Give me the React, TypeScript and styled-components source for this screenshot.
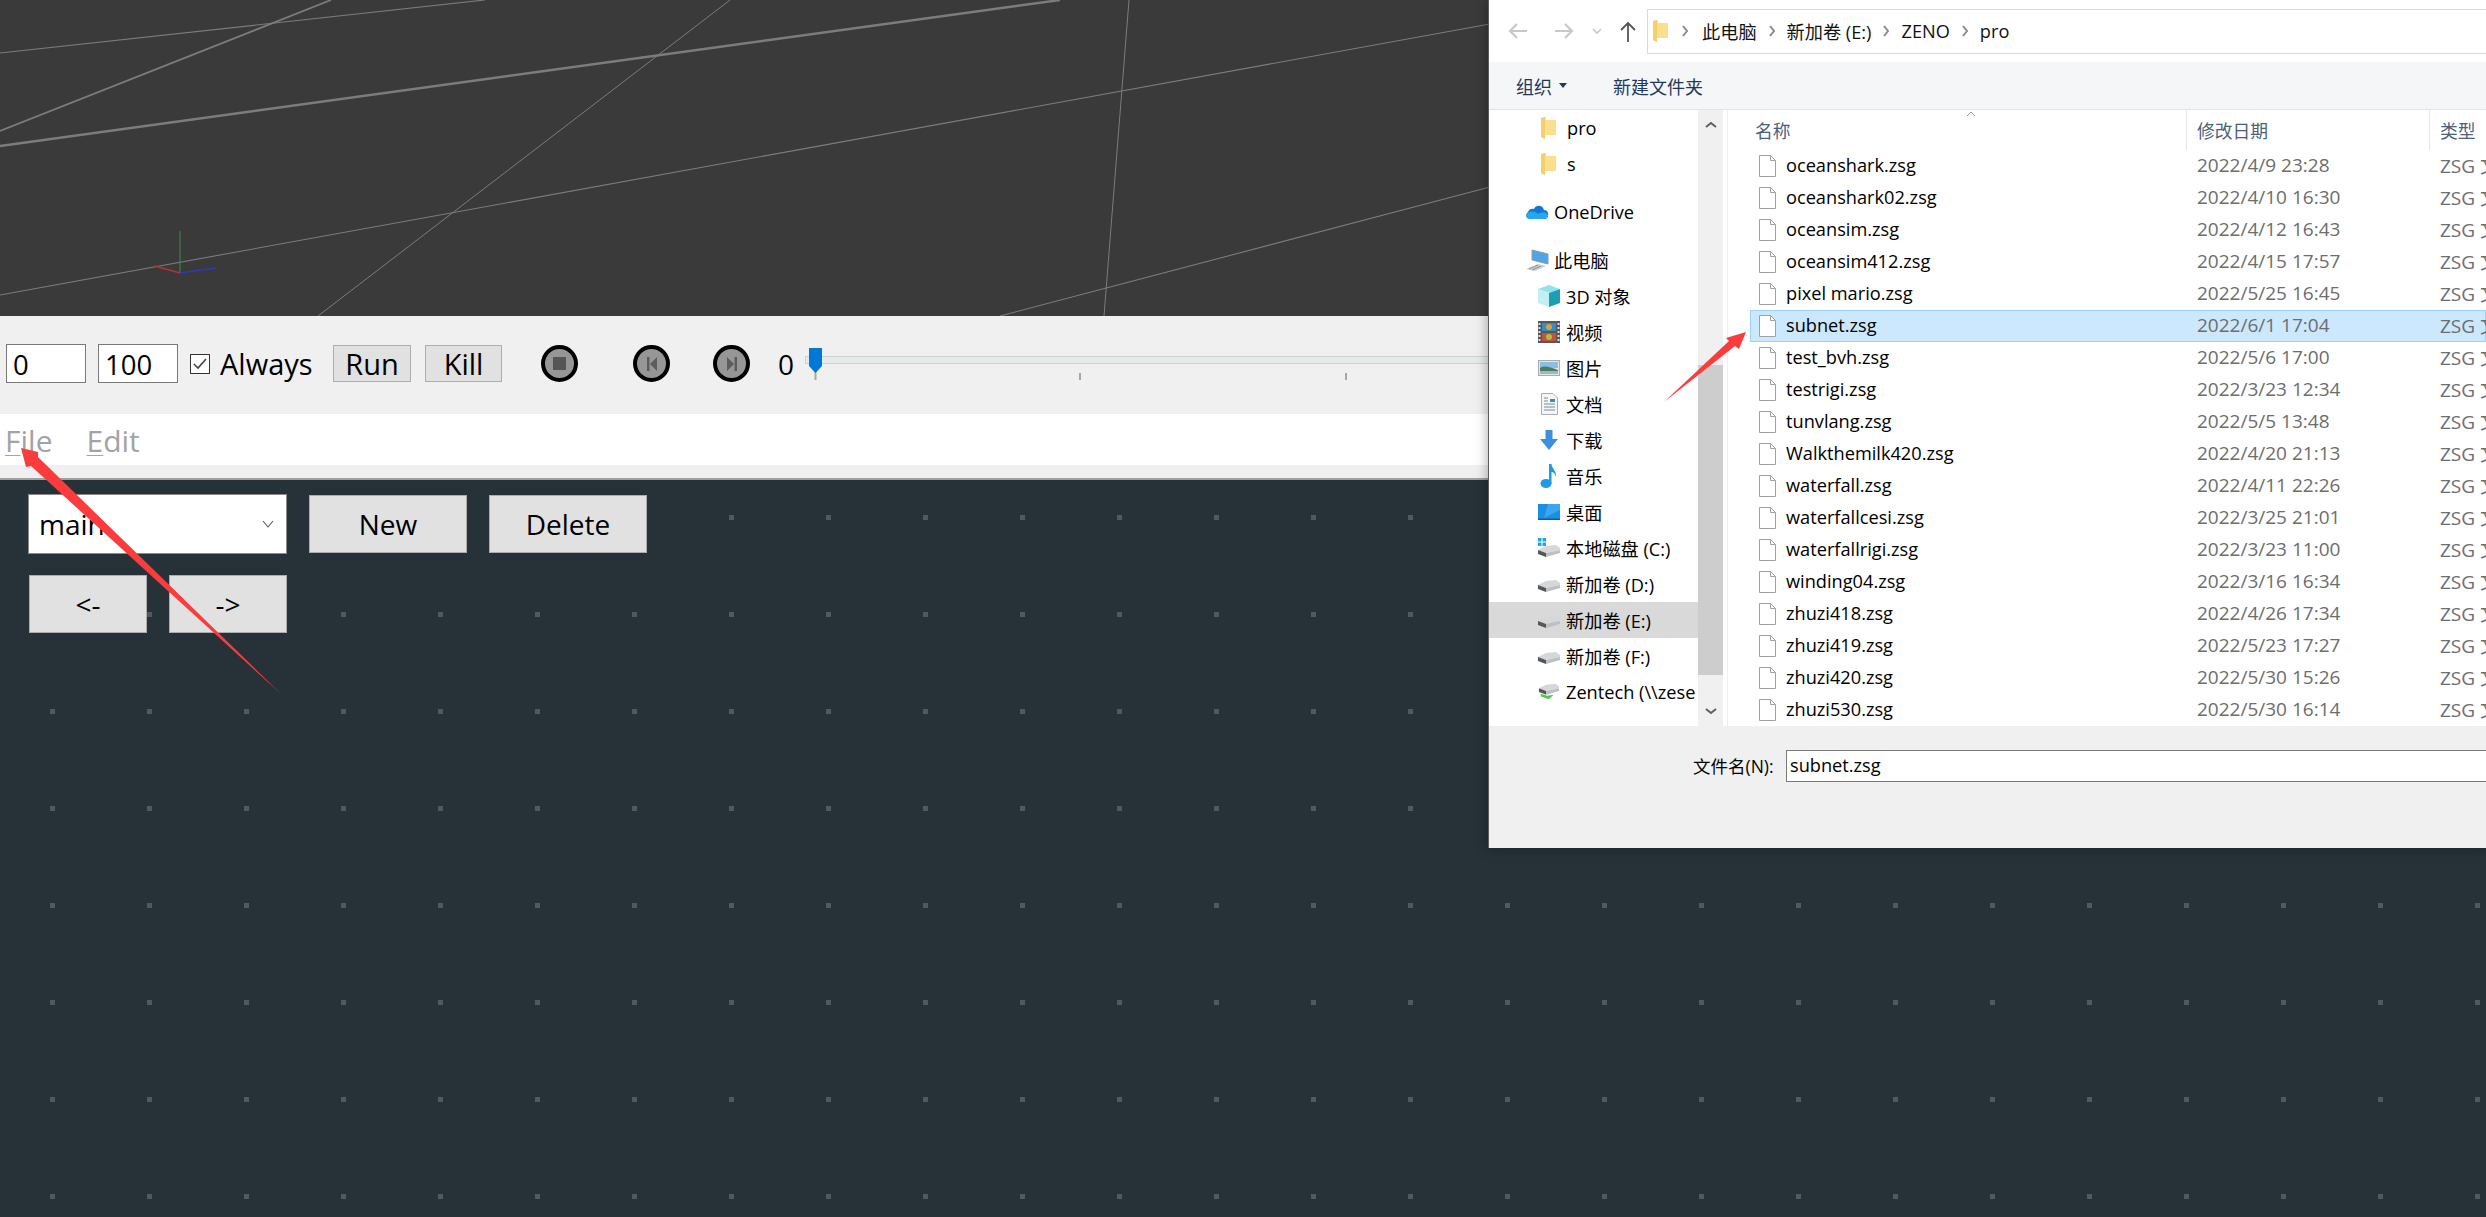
import React from 'react'
import styled, { createGlobalStyle } from 'styled-components'

const UI_FONT = `"Open Sans", "Noto Sans CJK SC", sans-serif`

const GlobalStyle = createGlobalStyle`
  html, body {
    margin: 0;
    padding: 0;
    background: #263238;
  }
  * {
    box-sizing: border-box;
  }
`

const Page = styled.div`
  position: relative;
  width: 2486px;
  height: 1217px;
  overflow: hidden;
  display: flex;
  flex-direction: column;
  font-family: ${UI_FONT};
`

const Viewport = styled.div`
  height: 316px;
  background: #3a3a3a;
  flex: none;
  svg {
    display: block;
  }
`

const Timeline = styled.div`
  height: 98px;
  flex: none;
  background: #f0f0f0;
  padding: 28px 0 0 6px;
  display: flex;
  align-items: flex-start;
`

const TimelineRow = styled.div`
  height: 39px;
  width: 100%;
  display: flex;
  align-items: center;
`

const FrameInput = styled.div<{ $ml?: number }>`
  width: 80px;
  height: 39px;
  margin-left: ${(p) => p.$ml ?? 0}px;
  background: #fff;
  border: 1px solid #7a7a7a;
  padding: 2px 0 0 6px;
  font-size: 27.5px;
  line-height: 36px;
  color: #000;
`

const CheckGroup = styled.div`
  width: 143px;
  margin-left: 12px;
  display: flex;
  align-items: center;
  gap: 10px;
  font-size: 29px;
  color: #000;
`

const CheckBox = styled.div`
  width: 20px;
  height: 20px;
  border: 1px solid #333;
  background: #fff;
  display: flex;
  align-items: center;
  justify-content: center;
`

const BarButton = styled.div<{ $w: number; $ml?: number }>`
  width: ${(p) => p.$w}px;
  height: 37px;
  margin-left: ${(p) => p.$ml ?? 0}px;
  background: #e1e1e1;
  border: 1px solid #adadad;
  display: flex;
  align-items: center;
  justify-content: center;
  font-size: 29px;
  color: #000;
`

const MediaButton = styled.div<{ $ml: number }>`
  width: 37px;
  height: 37px;
  margin-left: ${(p) => p.$ml}px;
  border-radius: 50%;
  border: 4px solid #000;
  background: #969696;
  display: flex;
  align-items: center;
  justify-content: center;
  flex: none;
`

const FrameReadout = styled.div`
  width: 28px;
  margin-left: 27px;
  padding-left: 1px;
  font-size: 28px;
  color: #000;
`

const Slider = styled.div`
  position: relative;
  flex: 1;
  height: 39px;
  padding-top: 12px;
`

const SliderTrack = styled.div`
  height: 8px;
  background: #e7eaea;
  border-top: 1px solid #d0d0d0;
  border-bottom: 1px solid #d0d0d0;
  border-left: 1px solid #d0d0d0;
`

const SliderHandle = styled.svg`
  position: absolute;
  left: 4px;
  top: 4px;
`

const SliderTick = styled.div<{ $left: number }>`
  position: absolute;
  left: ${(p) => p.$left}px;
  top: 29px;
  width: 2px;
  height: 7px;
  background: #a8a89c;
`

const MenuBar = styled.div`
  height: 51px;
  flex: none;
  background: #fff;
  padding: 3px 0 0 5px;
  display: flex;
  gap: 34px;
  align-items: flex-start;
  font-size: 30px;
  line-height: 48px;
  color: #a3a3a3;
  u {
    text-underline-offset: 3px;
    text-decoration-thickness: 1px;
  }
`

const MenuStrip = styled.div`
  height: 15px;
  flex: none;
  background: #f0f0f0;
  border-bottom: 2px solid #a0a0a0;
`

const Canvas = styled.div`
  flex: 1;
  padding: 14px 0 0 28px;
  background-color: #263238;
  background-image: conic-gradient(at 5px 5px, transparent 75%, #4f5a60 75%);
  background-size: 97px 97px;
  background-position: 50px 35px;
`

const CanvasRow = styled.div<{ $mt?: number; $ml?: number }>`
  display: flex;
  align-items: center;
  gap: 22px;
  margin-top: ${(p) => p.$mt ?? 0}px;
  margin-left: ${(p) => p.$ml ?? 0}px;
`

const GraphSelect = styled.div`
  width: 259px;
  height: 60px;
  background: #fff;
  border: 1px solid #8a8a8a;
  padding: 0 12px 0 10px;
  display: flex;
  align-items: center;
  justify-content: space-between;
  font-size: 28px;
  color: #000;
`

const CanvasButton = styled.div<{ $w: number }>`
  width: ${(p) => p.$w}px;
  height: 58px;
  background: #e1e1e1;
  border: 1px solid #adadad;
  display: flex;
  align-items: center;
  justify-content: center;
  font-size: 28px;
  color: #000;
`

const Dialog = styled.div`
  position: absolute;
  left: 1488px;
  top: 0;
  right: 0;
  height: 848px;
  display: flex;
  flex-direction: column;
  overflow: hidden;
  background: #fff;
  border-left: 1px solid #5e5e5e;
  box-shadow: 0 0 12px rgba(0, 0, 0, 0.35);
  font-size: 18.2px;
  color: #000;
`

const AddressRow = styled.div`
  height: 62px;
  flex: none;
  padding-left: 17px;
  display: flex;
  align-items: center;
`

const NavSlot = styled.div<{ $w: number; $ml?: number }>`
  width: ${(p) => p.$w}px;
  margin-left: ${(p) => p.$ml ?? 0}px;
  display: flex;
  justify-content: center;
  flex: none;
`

const AddressBox = styled.div`
  height: 45px;
  flex: 1;
  margin: 0 -10px 0 7px;
  border: 1px solid #d9d9d9;
  padding-left: 5px;
  display: flex;
  align-items: center;
  color: #111;
`

const CrumbSep = styled.div<{ $w?: number }>`
  width: ${(p) => p.$w ?? 30}px;
  display: flex;
  justify-content: center;
  flex: none;
`

const CommandBar = styled.div`
  height: 48px;
  flex: none;
  background: #f5f6f7;
  border-bottom: 1px solid #e5e5e5;
  padding-left: 27px;
  display: flex;
  align-items: center;
  color: #1e395b;
  font-size: 18px;
`

const CommandItem = styled.div<{ $w: number }>`
  width: ${(p) => p.$w}px;
  display: flex;
  align-items: center;
  gap: 7px;
`

const Body = styled.div`
  height: 616px;
  flex: none;
  display: flex;
`

const NavPane = styled.div`
  width: 209px;
  flex: none;
  overflow: hidden;
`

const NavGroup = styled.div<{ $mt?: number }>`
  margin-top: ${(p) => p.$mt ?? 0}px;
`

const NavRow = styled.div<{ $indent: number; $gap: number; $active?: boolean }>`
  height: 36px;
  padding-left: ${(p) => p.$indent}px;
  display: flex;
  align-items: center;
  gap: ${(p) => p.$gap}px;
  white-space: nowrap;
  overflow: hidden;
  background: ${(p) => (p.$active ? '#d9d9d9' : 'transparent')};
`

const NavIcon = styled.div<{ $w: number }>`
  width: ${(p) => p.$w}px;
  flex: none;
  display: flex;
  justify-content: center;
  svg {
    display: block;
  }
`

const ScrollBar = styled.div`
  width: 25px;
  flex: none;
  background: #f0f0f0;
  display: flex;
  flex-direction: column;
  align-items: stretch;
`

const ScrollArrow = styled.div<{ $grow?: boolean }>`
  height: 30px;
  display: flex;
  align-items: center;
  justify-content: center;
  margin-top: ${(p) => (p.$grow ? 'auto' : '0')};
`

const ScrollThumb = styled.div`
  height: 310px;
  margin-top: 225px;
  background: #cdcdcd;
`

const FileList = styled.div`
  flex: 1;
  min-width: 0;
  margin-left: 4px;
  border-left: 1px solid #f0f0f0;
  padding-left: 22px;
  position: relative;
`

const HeaderRow = styled.div`
  height: 40px;
  display: grid;
  grid-template-columns: 437px 243px 1fr;
  color: #4c607a;
  font-size: 17.8px;
`

const HeaderCell = styled.div<{ $pl: number; $sep?: boolean }>`
  padding-left: ${(p) => p.$pl}px;
  display: flex;
  align-items: center;
  white-space: nowrap;
  border-right: ${(p) => (p.$sep ? '1px solid #e5e5e5' : 'none')};
`

const SortCaret = styled.svg`
  position: absolute;
  left: 238px;
  top: 1px;
`

const FileRow = styled.div<{ $selected?: boolean }>`
  height: 32px;
  display: grid;
  grid-template-columns: 437px 243px 1fr;
  align-items: center;
  white-space: nowrap;
  padding-bottom: 2px;
  background: ${(p) => (p.$selected ? '#cce8ff' : 'transparent')};
  box-shadow: ${(p) => (p.$selected ? 'inset 0 0 0 1px #99d1ff' : 'none')};
`

const NameCell = styled.div`
  padding-left: 9px;
  display: flex;
  align-items: center;
  gap: 10px;
  svg {
    flex: none;
    margin-top: 2px;
  }
`

const MetaCell = styled.div`
  padding-left: 10px;
  color: #6d6d6d;
  font-size: 19px;
`

const Footer = styled.div`
  flex: 1;
  background: #f0f0f0;
  padding: 24px 0 0 204px;
  display: flex;
  align-items: flex-start;
`

const FooterLabel = styled.div`
  width: 93px;
  line-height: 32px;
  white-space: nowrap;
  font-size: 17.5px;
`

const FooterInput = styled.div`
  flex: 1;
  height: 32px;
  margin-right: -10px;
  background: #fff;
  border: 1px solid #7a7a7a;
  padding-left: 3px;
  line-height: 29px;
`

const Annotations = styled.svg`
  position: absolute;
  left: 0;
  top: 0;
  pointer-events: none;
`

const Folder = () => (
  <svg width="15" height="22" viewBox="0 0 15 22">
    <path d="M0 1 L5 0 L5 3 L15 3 L15 18 L4 18 L4 22 L0 20 Z" fill="#fbdf8f" />
    <path d="M0 1 L4 0 L4 22 L0 20 Z" fill="#f6cf6a" />
  </svg>
)

const OneDriveIcon = () => (
  <svg width="24" height="16" viewBox="0 0 24 16">
    <path d="M5 15 C1 15 0 10 3 8 C4 5 7 4 9 5 C11 0 18 1 19 6 C22 6 24 9 23 12 C22 15 20 15 19 15 Z" fill="#0f78d4" />
    <path d="M5 15 C1 15 0 11 3 9 C7 6 11 8 13 10 C16 8 21 7 23 11 C23 14 21 15 19 15 Z" fill="#28a8ea" />
  </svg>
)

const PcIcon = () => (
  <svg width="24" height="22" viewBox="0 0 24 22">
    <path d="M7 1 L23 5 L23 15 L7 11 Z" fill="#4fa6e6" stroke="#8c9aa5" />
    <path d="M1 20 L13 15 L21 17 L10 22 Z" fill="#c9ced2" />
    <path d="M4 20 L13 16 M7 21 L16 17" stroke="#8c9399" />
  </svg>
)

const CubeIcon = () => (
  <svg width="22" height="22" viewBox="0 0 22 22">
    <path d="M11 0 L22 4 L11 8 L0 4 Z" fill="#8fe3ea" />
    <path d="M0 4 L11 8 L11 22 L0 18 Z" fill="#c4eff2" />
    <path d="M11 8 L22 4 L22 18 L11 22 Z" fill="#1c9fb5" />
  </svg>
)

const VideoIcon = () => (
  <svg width="22" height="22" viewBox="0 0 22 22">
    <rect width="22" height="22" fill="#55575a" />
    <rect x="4" y="2" width="14" height="8" fill="#2f8fc9" />
    <rect x="4" y="12" width="14" height="8" fill="#c9503a" />
    <circle cx="11" cy="6" r="3" fill="#e0a030" />
    <circle cx="11" cy="16" r="3" fill="#a8c040" />
    <path d="M1.5 2 V20 M20.5 2 V20" stroke="#ddd" strokeDasharray="2 2" strokeWidth="2" />
  </svg>
)

const PictureIcon = () => (
  <svg width="22" height="16" viewBox="0 0 22 16">
    <rect x="0.5" y="0.5" width="21" height="15" fill="#dfe7ee" stroke="#a7acb0" />
    <rect x="2" y="2" width="18" height="6" fill="#8dbde0" />
    <path d="M2 8 C7 5 11 7 20 10 L20 14 L2 14 Z" fill="#4f7a63" />
    <path d="M2 11 L20 11 L20 14 L2 14 Z" fill="#9eb9b9" />
  </svg>
)

const DocIcon = () => (
  <svg width="17" height="22" viewBox="0 0 17 22">
    <path d="M0.5 0.5 H12 L16.5 5 V21.5 H0.5 Z" fill="#f5f6f7" stroke="#a9adb2" />
    <path d="M3 5 H7 M3 8 H7 M3 11 H14 M3 14 H14 M3 17 H14" stroke="#7d8a96" />
    <rect x="9" y="6" width="5" height="3" fill="#3d88c7" />
  </svg>
)

const DownloadIcon = () => (
  <svg width="20" height="20" viewBox="0 0 20 20">
    <path d="M6.5 0 H13.5 V9 H19 L10 20 L1 9 H6.5 Z" fill="#3f8fe0" />
  </svg>
)

const MusicIcon = () => (
  <svg width="18" height="24" viewBox="0 0 18 24">
    <ellipse cx="6" cy="19.5" rx="5.5" ry="4.5" fill="#1e9be4" />
    <path d="M9 0 H11.5 C12 5 17 7 16 13 C15 9 13 8 11.5 8 V20 H9 Z" fill="#1e9be4" />
  </svg>
)

const DesktopIcon = () => (
  <svg width="22" height="16" viewBox="0 0 22 16">
    <rect width="22" height="16" fill="#1a8fe3" />
    <path d="M10 0 H22 V6 L6 14 Z" fill="#3ba5ee" />
    <rect y="14.5" width="22" height="1.5" fill="#0c5f9e" />
  </svg>
)

const DriveIcon = () => (
  <svg width="22" height="18" viewBox="0 0 22 18">
    <g transform="translate(0 5)">
      <path d="M0 5 L8 1 L18 0 L22 3 L22 5 L8 8 Z" fill="#d5d7d9" />
      <path d="M0 5 L8 8 V12 L0 9 Z" fill="#55585b" />
      <path d="M8 8 L22 5 V8 L8 12 Z" fill="#bdbfc1" />
    </g>
  </svg>
)

const SystemDriveIcon = () => (
  <svg width="22" height="20" viewBox="0 0 22 20">
    <rect x="0" y="0" width="3.5" height="3.5" fill="#1ea5f0" />
    <rect x="4.5" y="0" width="3.5" height="3.5" fill="#1ea5f0" />
    <rect x="0" y="4.5" width="3.5" height="3.5" fill="#1ea5f0" />
    <rect x="4.5" y="4.5" width="3.5" height="3.5" fill="#1ea5f0" />
    <g transform="translate(0 7)">
      <path d="M0 5 L8 1 L18 0 L22 3 L22 5 L8 8 Z" fill="#d5d7d9" />
      <path d="M0 5 L8 8 V12 L0 9 Z" fill="#55585b" />
      <path d="M8 8 L22 5 V8 L8 12 Z" fill="#bdbfc1" />
    </g>
  </svg>
)

const NetDriveIcon = () => (
  <svg width="24" height="18" viewBox="0 0 24 18">
    <path d="M1 5 L9 1 L19 0 L23 3 L23 5 L9 8 Z" fill="#d5d7d9" />
    <path d="M1 5 L9 8 V12 L1 9 Z" fill="#55585b" />
    <path d="M9 8 L23 5 V8 L9 12 Z" fill="#bdbfc1" />
    <path d="M3 11 L10 13 L17 12 L12 17 L3 14 Z" fill="#58c45c" />
  </svg>
)

const FileIcon = () => (
  <svg width="17" height="22" viewBox="0 0 17 22">
    <path d="M0.5 0.5 H11.5 L16.5 5.5 V21.5 H0.5 Z" fill="#fff" stroke="#a0a0a0" />
    <path d="M11.5 0.5 V5.5 H16.5" fill="none" stroke="#a0a0a0" />
  </svg>
)

const Chevron = ({ dir = 'right', color = '#8a8a8a' }: { dir?: string; color?: string }) => (
  <svg width="8" height="12" viewBox="0 0 8 12" style={{ transform: dir === 'up' ? 'rotate(-90deg)' : dir === 'down' ? 'rotate(90deg)' : undefined }}>
    <path d="M2 1 L6 6 L2 11" fill="none" stroke={color} strokeWidth="2" />
  </svg>
)

const HArrow = ({ flip }: { flip?: boolean }) => (
  <svg width="22" height="20" viewBox="0 0 22 20" style={{ transform: flip ? 'scaleX(-1)' : undefined }}>
    <path d="M20 10 H3 M10 3 L3 10 L10 17" fill="none" stroke="#c8c8c8" strokeWidth="2.2" />
  </svg>
)

const navGroups = [
  { mt: 0, rows: [
    { indent: 52, w: 15, gap: 11, icon: <Folder />, text: 'pro' },
    { indent: 52, w: 15, gap: 11, icon: <Folder />, text: 's' },
  ] },
  { mt: 12, rows: [{ indent: 36, w: 24, gap: 5, icon: <OneDriveIcon />, text: 'OneDrive' }] },
  { mt: 12, rows: [
    { indent: 36, w: 24, gap: 5, icon: <PcIcon />, text: '此电脑' },
    { indent: 49, w: 22, gap: 6, icon: <CubeIcon />, text: '3D 对象' },
    { indent: 49, w: 22, gap: 6, icon: <VideoIcon />, text: '视频' },
    { indent: 49, w: 22, gap: 6, icon: <PictureIcon />, text: '图片' },
    { indent: 49, w: 22, gap: 6, icon: <DocIcon />, text: '文档' },
    { indent: 49, w: 22, gap: 6, icon: <DownloadIcon />, text: '下载' },
    { indent: 49, w: 22, gap: 6, icon: <MusicIcon />, text: '音乐' },
    { indent: 49, w: 22, gap: 6, icon: <DesktopIcon />, text: '桌面' },
    { indent: 49, w: 22, gap: 6, icon: <SystemDriveIcon />, text: '本地磁盘 (C:)' },
    { indent: 49, w: 22, gap: 6, icon: <DriveIcon />, text: '新加卷 (D:)' },
    { indent: 49, w: 22, gap: 6, icon: <DriveIcon />, text: '新加卷 (E:)', active: true },
    { indent: 49, w: 22, gap: 6, icon: <DriveIcon />, text: '新加卷 (F:)' },
    { indent: 49, w: 22, gap: 6, icon: <NetDriveIcon />, text: 'Zentech (\\\\zese' },
  ] },
]

const files = [
  ['oceanshark.zsg', '2022/4/9 23:28'],
  ['oceanshark02.zsg', '2022/4/10 16:30'],
  ['oceansim.zsg', '2022/4/12 16:43'],
  ['oceansim412.zsg', '2022/4/15 17:57'],
  ['pixel mario.zsg', '2022/5/25 16:45'],
  ['subnet.zsg', '2022/6/1 17:04'],
  ['test_bvh.zsg', '2022/5/6 17:00'],
  ['testrigi.zsg', '2022/3/23 12:34'],
  ['tunvlang.zsg', '2022/5/5 13:48'],
  ['Walkthemilk420.zsg', '2022/4/20 21:13'],
  ['waterfall.zsg', '2022/4/11 22:26'],
  ['waterfallcesi.zsg', '2022/3/25 21:01'],
  ['waterfallrigi.zsg', '2022/3/23 11:00'],
  ['winding04.zsg', '2022/3/16 16:34'],
  ['zhuzi418.zsg', '2022/4/26 17:34'],
  ['zhuzi419.zsg', '2022/5/23 17:27'],
  ['zhuzi420.zsg', '2022/5/30 15:26'],
  ['zhuzi530.zsg', '2022/5/30 16:14'],
]

const App: React.FC = () => {
  return (
    <Page>
      <GlobalStyle />
      <Viewport>
        <svg width="1490" height="316" viewBox="0 0 1490 316">
          <g fill="none" stroke="#7c7c7c">
            <line x1="0" y1="53" x2="485" y2="0" strokeWidth="1.2" />
            <line x1="0" y1="131" x2="331" y2="0" strokeWidth="1.8" />
            <line x1="0" y1="146" x2="1060" y2="0" strokeWidth="2.4" />
            <line x1="730" y1="0" x2="318" y2="316" strokeWidth="1" />
            <line x1="1129" y1="0" x2="1104" y2="316" strokeWidth="1" />
            <line x1="1490" y1="24" x2="0" y2="295" strokeWidth="1.1" />
            <line x1="1490" y1="187" x2="1000" y2="316" strokeWidth="1.1" />
          </g>
          <line x1="180" y1="273" x2="180" y2="231" stroke="#3f8a4c" />
          <line x1="180" y1="273" x2="155" y2="266" stroke="#b83232" strokeWidth="1.4" />
          <line x1="180" y1="273" x2="216" y2="268" stroke="#3434c4" strokeWidth="1.4" />
        </svg>
      </Viewport>
      <Timeline>
        <TimelineRow>
          <FrameInput>0</FrameInput>
          <FrameInput $ml={12}>100</FrameInput>
          <CheckGroup>
            <CheckBox>
              <svg width="14" height="12" viewBox="0 0 14 12">
                <path d="M1 6 L5 10 L13 1" fill="none" stroke="#444" strokeWidth="1.6" />
              </svg>
            </CheckBox>
            Always
          </CheckGroup>
          <BarButton $w={78}>Run</BarButton>
          <BarButton $w={77} $ml={14}>Kill</BarButton>
          <MediaButton $ml={39}>
            <svg width="13" height="13" viewBox="0 0 13 13"><rect width="13" height="13" fill="#555" /></svg>
          </MediaButton>
          <MediaButton $ml={55}>
            <svg width="10" height="14" viewBox="0 0 10 14"><path d="M0 0 H2.5 V14 H0 Z M10 0 V14 L3 7 Z" fill="#5c5c5c" /></svg>
          </MediaButton>
          <MediaButton $ml={43}>
            <svg width="10" height="14" viewBox="0 0 10 14"><path d="M10 0 H7.5 V14 H10 Z M0 0 V14 L7 7 Z" fill="#5c5c5c" /></svg>
          </MediaButton>
          <FrameReadout>0</FrameReadout>
          <Slider>
            <SliderTrack />
            <SliderHandle width="13" height="32" viewBox="0 0 13 32">
              <rect x="5.5" y="22" width="2" height="10" fill="#a8a89c" />
              <path d="M0 0 H13 V18 L6.5 25 L0 18 Z" fill="#0078d7" />
            </SliderHandle>
            <SliderTick $left={274} />
            <SliderTick $left={540} />
          </Slider>
        </TimelineRow>
      </Timeline>
      <MenuBar>
        <span><u>F</u>ile</span>
        <span><u>E</u>dit</span>
      </MenuBar>
      <MenuStrip />
      <Canvas>
        <CanvasRow>
          <GraphSelect>
            main
            <svg width="12" height="8" viewBox="0 0 12 8">
              <path d="M1 1 L6 7 L11 1" fill="none" stroke="#555" strokeWidth="1.1" />
            </svg>
          </GraphSelect>
          <CanvasButton $w={158}>New</CanvasButton>
          <CanvasButton $w={158}>Delete</CanvasButton>
        </CanvasRow>
        <CanvasRow $mt={21} $ml={1}>
          <CanvasButton $w={118}>&lt;-</CanvasButton>
          <CanvasButton $w={118}>-&gt;</CanvasButton>
        </CanvasRow>
      </Canvas>

      <Dialog>
        <AddressRow>
          <NavSlot $w={24}><HArrow /></NavSlot>
          <NavSlot $w={24} $ml={22}><HArrow flip /></NavSlot>
          <NavSlot $w={10} $ml={16}>
            <svg width="10" height="7" viewBox="0 0 10 7"><path d="M1 1 L5 5 L9 1" fill="none" stroke="#c8c8c8" strokeWidth="1.6" /></svg>
          </NavSlot>
          <NavSlot $w={24} $ml={14}>
            <svg width="18" height="21" viewBox="0 0 18 21"><path d="M9 21 V2 M2 9 L9 2 L16 9" fill="none" stroke="#555" strokeWidth="1.8" /></svg>
          </NavSlot>
          <AddressBox>
            <Folder />
            <CrumbSep $w={34}><Chevron /></CrumbSep>
            <span>此电脑</span>
            <CrumbSep><Chevron /></CrumbSep>
            <span>新加卷 (E:)</span>
            <CrumbSep><Chevron /></CrumbSep>
            <span>ZENO</span>
            <CrumbSep><Chevron /></CrumbSep>
            <span>pro</span>
          </AddressBox>
        </AddressRow>
        <CommandBar>
          <CommandItem $w={97}>
            组织
            <svg width="8" height="5" viewBox="0 0 8 5"><path d="M0 0 H8 L4 5 Z" fill="#1e395b" /></svg>
          </CommandItem>
          <CommandItem $w={120}>新建文件夹</CommandItem>
        </CommandBar>
        <Body>
          <NavPane>
            {navGroups.map((group, i) => (
              <NavGroup key={i} $mt={group.mt}>
                {group.rows.map((row) => (
                  <NavRow key={row.text} $indent={row.indent} $gap={row.gap} $active={row.active}>
                    <NavIcon $w={row.w}>{row.icon}</NavIcon>
                    {row.text}
                  </NavRow>
                ))}
              </NavGroup>
            ))}
          </NavPane>
          <ScrollBar>
            <ScrollArrow><Chevron dir="up" color="#606060" /></ScrollArrow>
            <ScrollThumb />
            <ScrollArrow $grow><Chevron dir="down" color="#606060" /></ScrollArrow>
          </ScrollBar>
          <FileList>
            <SortCaret width="10" height="6" viewBox="0 0 10 6">
              <path d="M1 5 L5 1 L9 5" fill="none" stroke="#9a9a9a" />
            </SortCaret>
            <HeaderRow>
              <HeaderCell $pl={5} $sep>名称</HeaderCell>
              <HeaderCell $pl={10} $sep>修改日期</HeaderCell>
              <HeaderCell $pl={10}>类型</HeaderCell>
            </HeaderRow>
            {files.map(([name, date]) => (
              <FileRow key={name} $selected={name === 'subnet.zsg'}>
                <NameCell><FileIcon />{name}</NameCell>
                <MetaCell>{date}</MetaCell>
                <MetaCell>ZSG 文件</MetaCell>
              </FileRow>
            ))}
          </FileList>
        </Body>
        <Footer>
          <FooterLabel>文件名(N):</FooterLabel>
          <FooterInput>subnet.zsg</FooterInput>
        </Footer>
      </Dialog>

      <Annotations width="2486" height="1217" viewBox="0 0 2486 1217">
        <polygon points="21,448 38,452 38,457 281,694 31,466 26,467" fill="#fb3c3c" />
        <polygon points="1746,332 1739,349 1735,346 1664,402 1729,341 1726,338" fill="#fb3c3c" />
      </Annotations>
    </Page>
  )
}

export default App
